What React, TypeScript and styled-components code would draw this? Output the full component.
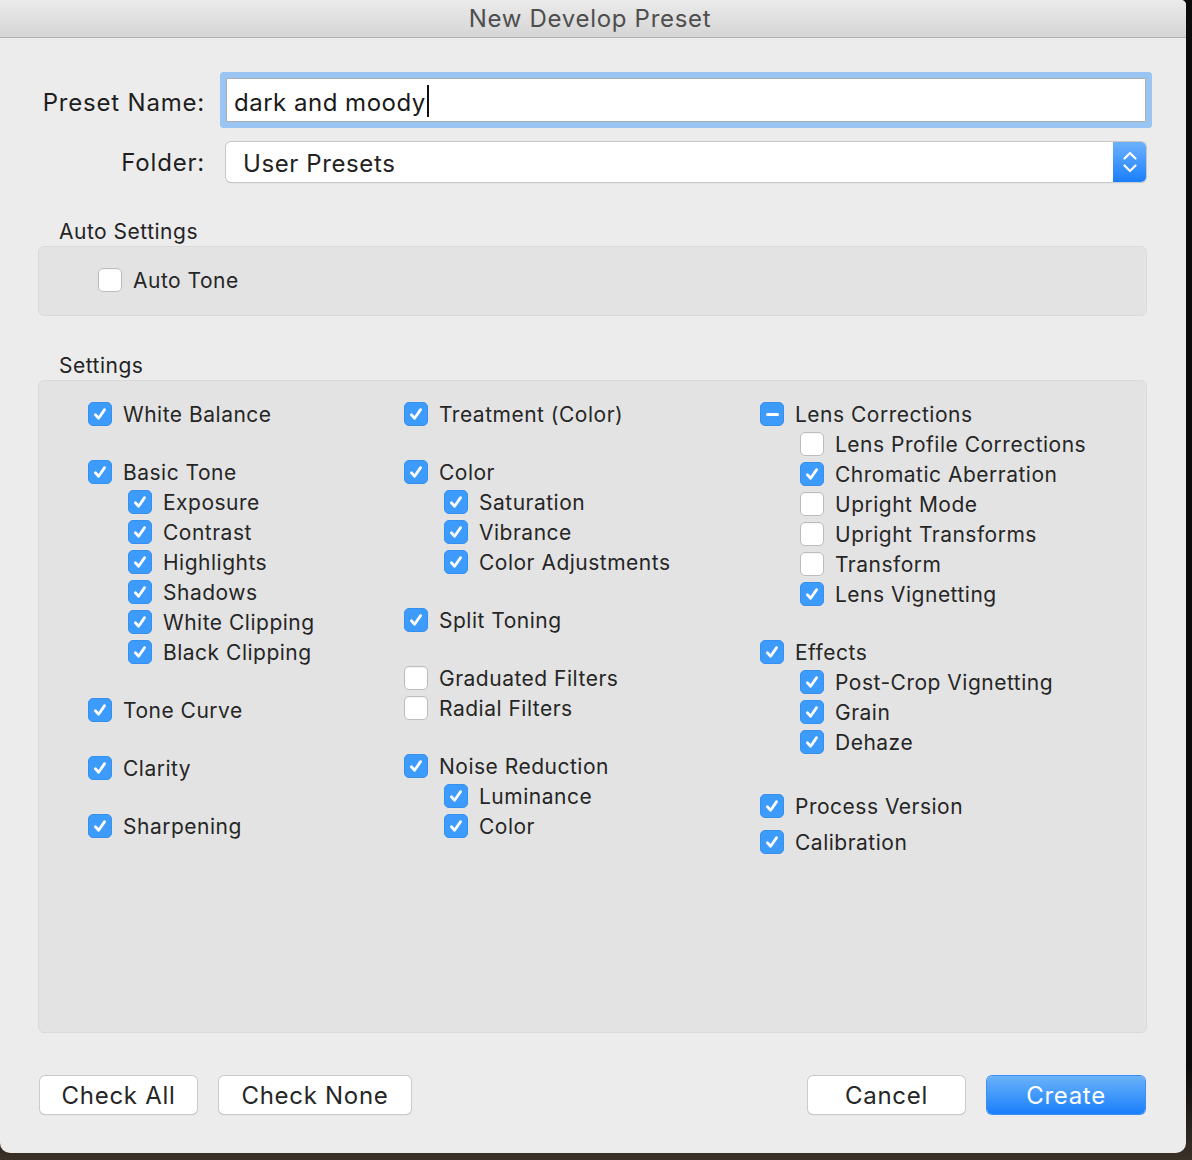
import React from 'react';
import styled, { createGlobalStyle } from 'styled-components';

type CheckState = 'on' | 'off' | 'mixed';

interface Item {
  label: string;
  state: CheckState;
  sub?: boolean;
  gap?: number;
}

const columns: Item[][] = [
  [
    { label: 'White Balance', state: 'on' },
    { label: 'Basic Tone', state: 'on', gap: 28 },
    { label: 'Exposure', state: 'on', sub: true },
    { label: 'Contrast', state: 'on', sub: true },
    { label: 'Highlights', state: 'on', sub: true },
    { label: 'Shadows', state: 'on', sub: true },
    { label: 'White Clipping', state: 'on', sub: true },
    { label: 'Black Clipping', state: 'on', sub: true },
    { label: 'Tone Curve', state: 'on', gap: 28 },
    { label: 'Clarity', state: 'on', gap: 28 },
    { label: 'Sharpening', state: 'on', gap: 28 },
  ],
  [
    { label: 'Treatment (Color)', state: 'on' },
    { label: 'Color', state: 'on', gap: 28 },
    { label: 'Saturation', state: 'on', sub: true },
    { label: 'Vibrance', state: 'on', sub: true },
    { label: 'Color Adjustments', state: 'on', sub: true },
    { label: 'Split Toning', state: 'on', gap: 28 },
    { label: 'Graduated Filters', state: 'off', gap: 28 },
    { label: 'Radial Filters', state: 'off' },
    { label: 'Noise Reduction', state: 'on', gap: 28 },
    { label: 'Luminance', state: 'on', sub: true },
    { label: 'Color', state: 'on', sub: true },
  ],
  [
    { label: 'Lens Corrections', state: 'mixed' },
    { label: 'Lens Profile Corrections', state: 'off', sub: true },
    { label: 'Chromatic Aberration', state: 'on', sub: true },
    { label: 'Upright Mode', state: 'off', sub: true },
    { label: 'Upright Transforms', state: 'off', sub: true },
    { label: 'Transform', state: 'off', sub: true },
    { label: 'Lens Vignetting', state: 'on', sub: true },
    { label: 'Effects', state: 'on', gap: 28 },
    { label: 'Post-Crop Vignetting', state: 'on', sub: true },
    { label: 'Grain', state: 'on', sub: true },
    { label: 'Dehaze', state: 'on', sub: true },
    { label: 'Process Version', state: 'on', gap: 34 },
    { label: 'Calibration', state: 'on', gap: 6 },
  ],
];

const Checkbox = ({ state }: { state: CheckState }) => (
  <Box state={state}>
    {state === 'on' && (
      <svg width="24" height="24" viewBox="0 0 24 24">
        <path d="M7 12.8l3.5 3.8 6.5-9.4" fill="none" stroke="#fff" strokeWidth="3" strokeLinecap="round" strokeLinejoin="round" />
      </svg>
    )}
    {state === 'mixed' && <Dash />}
  </Box>
);

const Row = ({ label, state, sub, gap }: Item) => (
  <RowWrap sub={sub} gap={gap}>
    <Checkbox state={state} />
    <RowLabel>{label}</RowLabel>
  </RowWrap>
);

const App = () => (
  <>
    <GlobalStyle />
    <Screen>
      <Dialog>
        <TitleBar>New Develop Preset</TitleBar>
        <Body>
          <FormRow>
            <FieldLabel shift={5}>Preset Name:</FieldLabel>
            <NameInput>
              dark and moody
              <Caret />
            </NameInput>
          </FormRow>
          <FormRow top={20}>
            <FieldLabel shift={1}>Folder:</FieldLabel>
            <Select>
              <SelectText>User Presets</SelectText>
              <Stepper>
                <svg width="20" height="30" viewBox="0 0 20 30">
                  <path d="M4.5 11.5l5.5-5.5 5.5 5.5M4.5 18.5l5.5 5.5 5.5-5.5" fill="none" stroke="#fff" strokeWidth="2.2" strokeLinecap="round" strokeLinejoin="round" />
                </svg>
              </Stepper>
            </Select>
          </FormRow>

          <GroupTitle top={36}>Auto Settings</GroupTitle>
          <GroupBox>
            <AutoRow>
              <Checkbox state="off" />
              <RowLabel>Auto Tone</RowLabel>
            </AutoRow>
          </GroupBox>

          <GroupTitle top={36}>Settings</GroupTitle>
          <SettingsBox>
            {columns.map((col, i) => (
              <Column key={i}>
                {col.map((item, j) => (
                  <Row key={j} {...item} />
                ))}
              </Column>
            ))}
          </SettingsBox>

          <Footer>
            <ButtonGroup>
              <Button width={157}>Check All</Button>
              <Button width={192}>Check None</Button>
            </ButtonGroup>
            <ButtonGroup>
              <Button width={157}>Cancel</Button>
              <Button width={158} primary>Create</Button>
            </ButtonGroup>
          </Footer>
        </Body>
      </Dialog>
    </Screen>
  </>
);

const GlobalStyle = createGlobalStyle`
  html, body {
    margin: 0;
    padding: 0;
    background: #141414;
  }
  body {
    font-family: Inter, "Noto Sans", "Liberation Sans", sans-serif;
    color: #262626;
  }
`;

const Screen = styled.div`
  width: 1192px;
  height: 1160px;
  overflow: hidden;
  background: linear-gradient(180deg, #0c0c0c 0%, #0c0c0c 92%, #3a3128 100%);
`;

const Dialog = styled.div`
  width: 1186px;
  height: 1153px;
  background: #ececec;
  border-radius: 0 5px 10px 10px;
  overflow: hidden;
  display: flex;
  flex-direction: column;
`;

const TitleBar = styled.div`
  height: 37px;
  flex-shrink: 0;
  display: flex;
  align-items: center;
  justify-content: center;
  padding-right: 6px;
  background: linear-gradient(180deg, #ebebeb 0%, #d5d5d5 100%);
  border-bottom: 1px solid #b2b2b2;
  font-size: 24px;
  color: #4e4e4e;
  letter-spacing: 0.7px;
`;

const Body = styled.div`
  flex: 1;
  display: flex;
  flex-direction: column;
  padding: 40px 40px 0 38px;
`;

interface TopType {
  top?: number;
}

const FormRow = styled.div<TopType>`
  display: flex;
  align-items: center;
  gap: 21px;
  margin-top: ${({ top }) => top ?? 0}px;
`;

const FieldLabel = styled.div<{ shift: number }>`
  width: 167px;
  padding-top: ${({ shift }) => shift}px;
  text-align: right;
  font-size: 24px;
  color: #1e1e1e;
  letter-spacing: 0.8px;
  white-space: nowrap;
`;

const NameInput = styled.div`
  flex: 1;
  height: 44px;
  box-sizing: border-box;
  display: flex;
  align-items: center;
  padding: 4px 0 0 7px;
  background: #fff;
  border: 1px solid #adadad;
  box-shadow: 0 0 0 6px #9ac4f1;
  border-radius: 1px;
  font-size: 24px;
  color: #1a1a1a;
  letter-spacing: 0.5px;
`;

const Caret = styled.span`
  display: inline-block;
  width: 2px;
  height: 32px;
  margin: 0 0 2px 1px;
  background: #111;
`;

const Select = styled.div`
  flex: 1;
  height: 40px;
  box-sizing: border-box;
  display: flex;
  background: #fff;
  border-radius: 5px;
  box-shadow: 0 0 0 1px #c8c8c8, 0 1px 1px #b4b4b4;
  overflow: hidden;
`;

const SelectText = styled.div`
  flex: 1;
  display: flex;
  align-items: center;
  padding: 2px 0 0 17px;
  font-size: 24px;
  color: #222;
  letter-spacing: 0.6px;
`;

const Stepper = styled.div`
  width: 33px;
  display: flex;
  align-items: center;
  justify-content: center;
  background: linear-gradient(180deg, #6db1fc 0%, #1a7ffb 100%);
`;

const GroupTitle = styled.div<TopType>`
  margin-top: ${({ top }) => top ?? 0}px;
  padding-left: 21px;
  height: 28px;
  line-height: 28px;
  font-size: 21px;
  color: #232323;
  letter-spacing: 0.5px;
`;

const GroupBox = styled.div`
  margin-right: -1px;
  height: 70px;
  box-sizing: border-box;
  background: #e3e3e3;
  border: 1px solid #dadada;
  border-radius: 6px;
  display: flex;
  align-items: center;
  padding-left: 59px;
`;

const AutoRow = styled.div`
  display: flex;
  align-items: center;
  gap: 11px;
  margin-top: -2px;
`;

const SettingsBox = styled.div`
  margin-right: -1px;
  height: 653px;
  box-sizing: border-box;
  background: #e3e3e3;
  border: 1px solid #dadada;
  border-radius: 6px;
  display: grid;
  grid-template-columns: 316px 356px 1fr;
  align-items: start;
  padding: 18px 0 0 49px;
`;

const Column = styled.div`
  display: flex;
  flex-direction: column;
`;

interface RowType {
  sub?: boolean;
  gap?: number;
}

const RowWrap = styled.div<RowType>`
  display: flex;
  align-items: center;
  gap: 11px;
  height: 30px;
  margin-top: ${({ gap }) => gap ?? 0}px;
  padding-left: ${({ sub }) => (sub ? 40 : 0)}px;
`;

const Box = styled.div<{ state: CheckState }>`
  width: 24px;
  height: 24px;
  flex-shrink: 0;
  box-sizing: border-box;
  border-radius: 5px;
  display: flex;
  align-items: center;
  justify-content: center;
  ${({ state }) => (state === 'off'
    ? `
      background: #fff;
      border: 1px solid #bcbcbc;
      box-shadow: inset 0 1px 1px rgba(0, 0, 0, 0.04);
    `
    : `
      background: #3d9bfc;
      border: 1px solid #3590f0;
    `)}
`;

const Dash = styled.div`
  width: 13px;
  height: 3px;
  border-radius: 2px;
  background: #fff;
`;

const RowLabel = styled.span`
  font-size: 21px;
  color: #262626;
  white-space: nowrap;
  letter-spacing: 0.5px;
  padding-top: 1px;
`;

const Footer = styled.div`
  display: flex;
  justify-content: space-between;
  margin-top: 43px;
  margin-left: 2px;
  margin-right: 1px;
`;

const ButtonGroup = styled.div`
  display: flex;
  gap: 22px;
`;

interface ButtonType {
  width: number;
  primary?: boolean;
}

const Button = styled.button<ButtonType>`
  all: unset;
  width: ${({ width }) => width}px;
  height: 38px;
  box-sizing: border-box;
  display: flex;
  align-items: center;
  justify-content: center;
  border-radius: 5px;
  font-family: Inter, "Noto Sans", "Liberation Sans", sans-serif;
  font-size: 24px;
  letter-spacing: 0.7px;
  ${({ primary }) => (primary
    ? `
      color: #fff;
      background: linear-gradient(180deg, #6ab2fa 0%, #1a7ffb 100%);
      box-shadow: 0 0 0 1px #3a8ff5;
    `
    : `
      color: #262626;
      background: #fff;
      box-shadow: 0 0 0 1px #cacaca, 0 1px 1px #b0b0b0;
    `)}
`;

export default App;
